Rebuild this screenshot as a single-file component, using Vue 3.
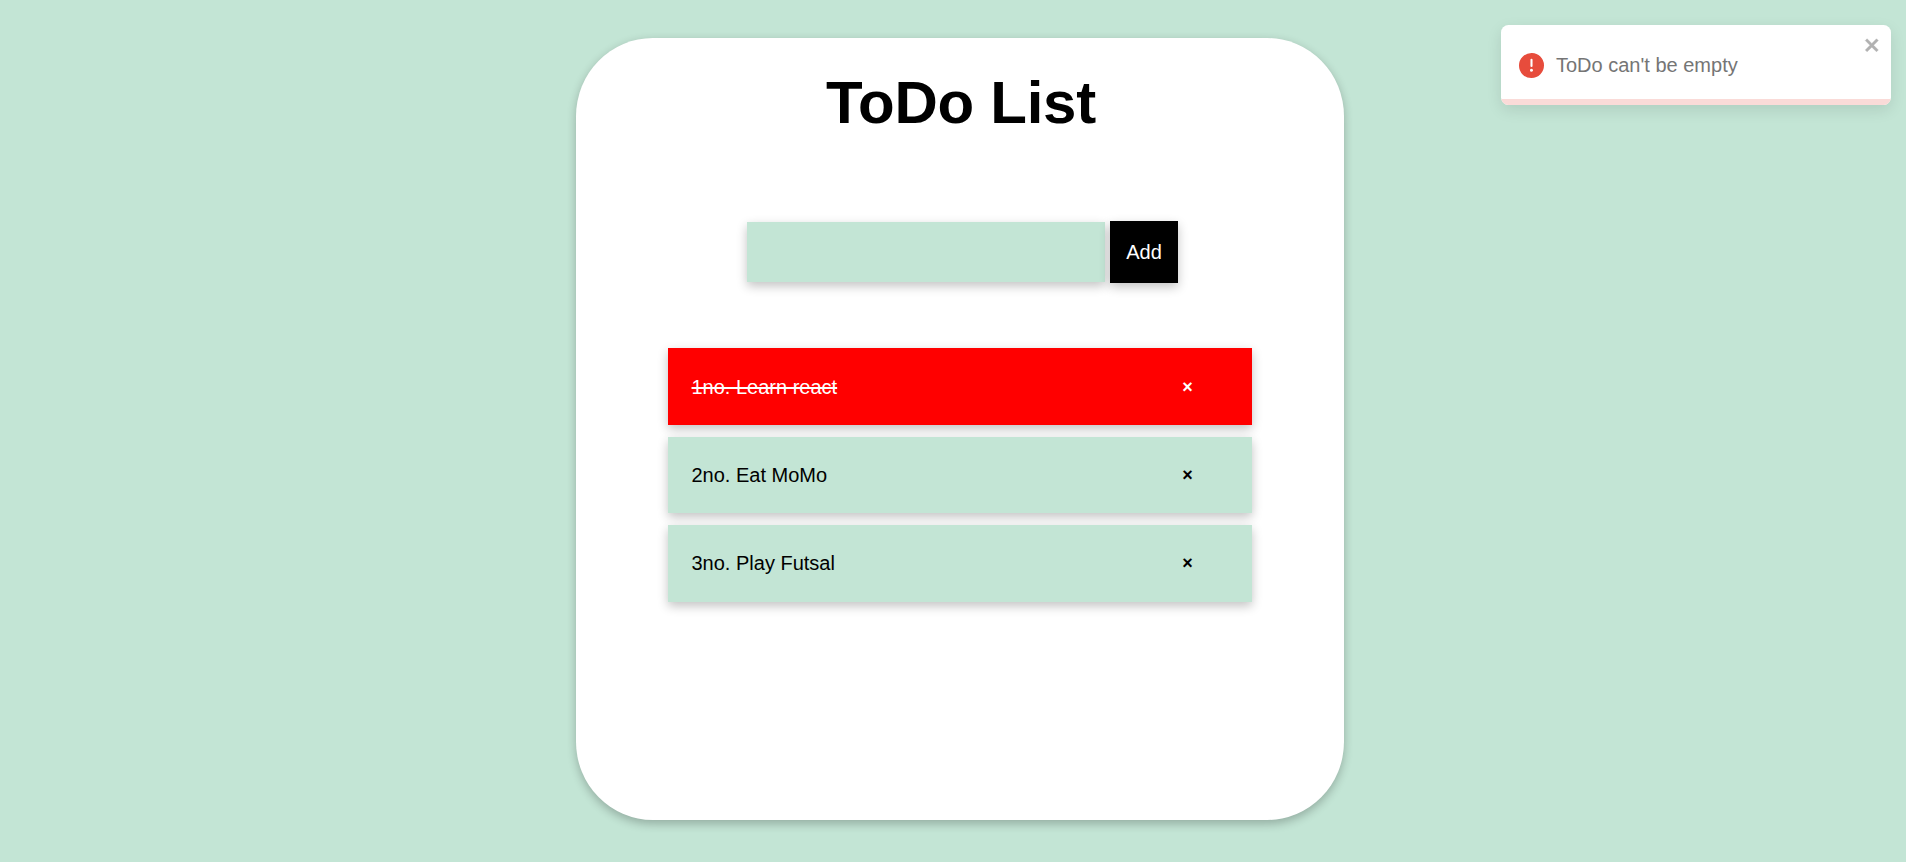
<script setup>
import { ref } from 'vue'

const draft = ref('')
const todos = ref([
  { id: 1, text: 'Learn react', done: true },
  { id: 2, text: 'Eat MoMo', done: false },
  { id: 3, text: 'Play Futsal', done: false },
])
const toastOpen = ref(true)

function add() {
  if (!draft.value.trim()) {
    toastOpen.value = true
    return
  }
  todos.value.push({ id: Date.now(), text: draft.value, done: false })
  draft.value = ''
}
function remove(id) {
  todos.value = todos.value.filter((t) => t.id !== id)
}
</script>

<template>
  <main class="page">
    <section class="card">
      <h1 class="title">ToDo List</h1>
      <form class="entry" @submit.prevent="add">
        <input v-model="draft" class="field" type="text" />
        <button class="add" type="submit">Add</button>
      </form>
      <ul class="list">
        <li v-for="(todo, i) in todos" :key="todo.id" class="row" :class="{ done: todo.done }">
          <span class="label" @click="todo.done = !todo.done">{{ i + 1 }}no. {{ todo.text }}</span>
          <button class="remove" type="button" @click="remove(todo.id)">×</button>
        </li>
      </ul>
    </section>

    <div v-if="toastOpen" class="toast" role="alert">
      <svg class="toast-icon" viewBox="0 0 24 24" fill="#e74c3c">
        <path d="M11.983 0a12.206 12.206 0 00-8.51 3.653A11.8 11.8 0 000 12.207 11.779 11.779 0 0011.8 24h.214A12.111 12.111 0 0024 11.791 11.766 11.766 0 0011.983 0zM10.5 16.542a1.476 1.476 0 011.449-1.53h.027a1.527 1.527 0 011.523 1.47 1.475 1.475 0 01-1.449 1.53h-.027a1.529 1.529 0 01-1.523-1.47zM11 12.5v-6a1 1 0 012 0v6a1 1 0 11-2 0z" />
      </svg>
      <span class="toast-text">ToDo can't be empty</span>
      <button class="toast-close" type="button" aria-label="close" @click="toastOpen = false">
        <svg viewBox="0 0 14 16" fill="#000">
          <path fill-rule="evenodd" d="M7.71 8.23l3.75 3.75-1.48 1.48-3.75-3.75-3.75 3.75L1 11.98l3.75-3.75L1 4.48 2.48 3l3.75 3.75L9.98 3l1.48 1.48-3.75 3.75z" />
        </svg>
      </button>
      <div class="toast-bar"></div>
    </div>
  </main>
</template>

<style>
body {
  background: #c3e5d5;
}
</style>

<style scoped>
.page {
  box-sizing: border-box;
  height: 862px;
  padding-top: 38px;
  padding-left: 576px;
  overflow: hidden;
  font-family: "Liberation Sans", Arial, sans-serif;
  font-size: 20px;
  color: #000;
}
.card {
  box-sizing: border-box;
  width: 768px;
  height: 782px;
  padding-top: 30px;
  border-radius: 10%;
  background: #fff;
  box-shadow: 0 3.75px 10px rgba(0, 0, 0, 0.24);
}
.title {
  margin: 0;
  padding-left: 2px;
  height: 70px;
  line-height: 70px;
  font-size: 60px;
  font-weight: 700;
  letter-spacing: -0.25px;
  text-align: center;
}
.entry {
  display: flex;
  align-items: center;
  gap: 5px;
  margin: 83px 0 0 171px;
}
.field {
  box-sizing: border-box;
  width: 358px;
  height: 60px;
  padding: 0 12px;
  border: 0;
  outline: 0;
  font: inherit;
  background: #c3e5d5;
  box-shadow: 0 3.75px 10px rgba(0, 0, 0, 0.24);
}
.add {
  width: 68px;
  height: 62px;
  padding: 0;
  border: 0;
  font: inherit;
  color: #fff;
  background: #000;
  box-shadow: 0 3.75px 10px rgba(0, 0, 0, 0.24);
}
.list {
  display: grid;
  grid-template-rows: 77px 76px 77px;
  row-gap: 12px;
  width: 584px;
  margin: 65px 0 0 92px;
  padding: 0;
  list-style: none;
}
.row {
  display: flex;
  align-items: center;
  justify-content: space-between;
  padding: 0 56px 0 23.5px;
  background: #c3e5d5;
  box-shadow: 0 3.75px 10px rgba(0, 0, 0, 0.24);
}
.row.done {
  padding-top: 1px;
  background: #f00;
  color: #fff;
}
.row.done .label {
  text-decoration: line-through 2px;
}
.remove {
  width: 17px;
  padding: 0;
  border: 0;
  background: none;
  font: 700 18px "Liberation Sans", Arial, sans-serif;
  color: inherit;
}
.toast {
  position: absolute;
  top: 25px;
  right: 15px;
  display: flex;
  align-items: center;
  box-sizing: border-box;
  width: 390px;
  height: 80px;
  padding: 0 18px;
  border-radius: 7.5px;
  overflow: hidden;
  background: #fff;
  box-shadow: 0 5px 15px rgba(0, 0, 0, 0.1);
  color: #757575;
}
.toast-icon {
  width: 25px;
  height: 25px;
  margin-right: 12px;
}
.toast-close {
  position: absolute;
  top: 10px;
  right: 9.5px;
  width: 17.5px;
  height: 20px;
  padding: 0;
  border: 0;
  background: none;
  opacity: 0.3;
}
.toast-close svg {
  display: block;
  width: 17.5px;
  height: 20px;
}
.toast-close path {
  stroke: #000;
  stroke-width: 0.3;
  stroke-linejoin: round;
}
.toast-bar {
  position: absolute;
  left: 0;
  right: 0;
  bottom: 0;
  height: 6px;
  background: #fadbd8;
}
</style>
